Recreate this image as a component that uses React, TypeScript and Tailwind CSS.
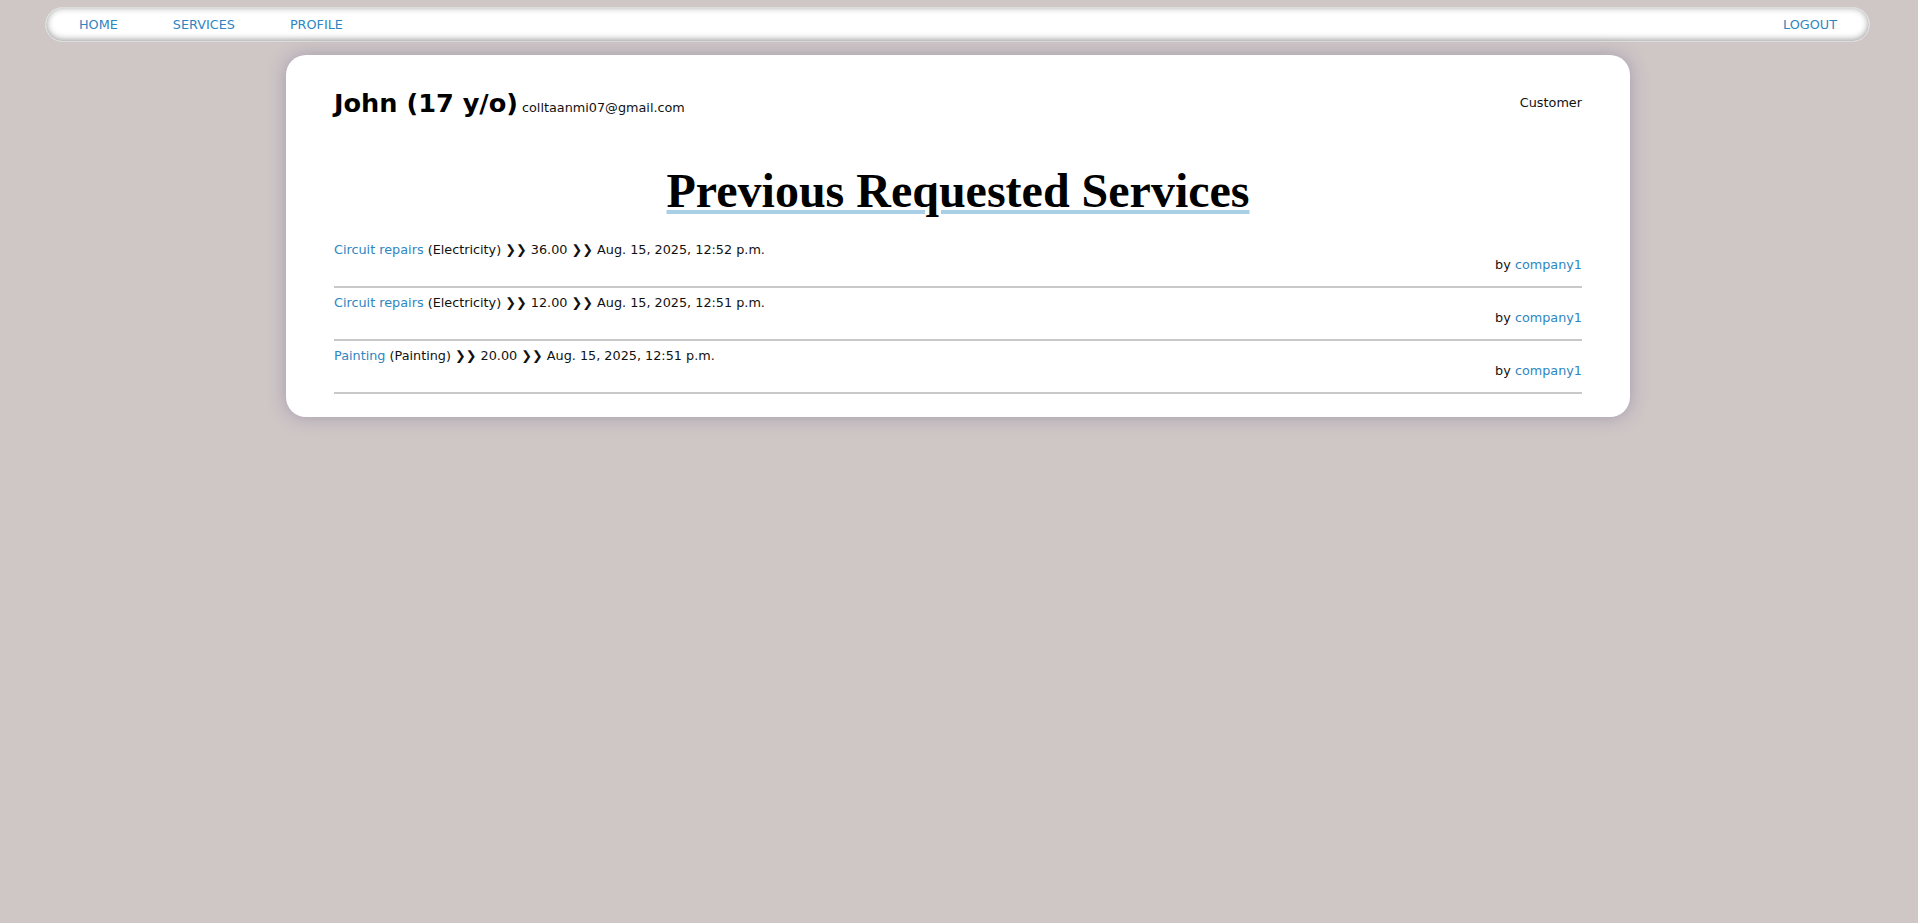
const navLinks = ["HOME", "SERVICES", "PROFILE"];

const requests = [
  { name: "Circuit repairs", category: "Electricity", price: "36.00", date: "Aug. 15, 2025, 12:52 p.m.", company: "company1" },
  { name: "Circuit repairs", category: "Electricity", price: "12.00", date: "Aug. 15, 2025, 12:51 p.m.", company: "company1" },
  { name: "Painting", category: "Painting", price: "20.00", date: "Aug. 15, 2025, 12:51 p.m.", company: "company1" },
];

const NavBar = () => (
  <nav className="ml-[45px] mr-[48px] h-[35px] flex items-center justify-between rounded-full border border-[#dcdcdc] bg-white pl-[33px] pr-[32px] shadow-[inset_0_-1px_7px_rgba(0,0,0,0.42)]">
    <div className="flex items-center gap-[55px]">
      {navLinks.map((label) => (
        <a key={label} href="#" className="text-[12.8px] leading-[15px] text-[#2e86c1]">
          {label}
        </a>
      ))}
    </div>
    <a href="#" className="text-[12.8px] leading-[15px] text-[#2e86c1]">
      LOGOUT
    </a>
  </nav>
);

const RequestRow = ({
  name,
  category,
  price,
  date,
  company,
}: {
  name: string;
  category: string;
  price: string;
  date: string;
  company: string;
}) => (
  <div className="pt-[7px] first:pt-0">
    <div className="text-[12.8px] leading-[15px] text-[#111]">
      <a href="#" className="text-[#2e86c1]">{name}</a> ({category}) ❯❯ {price} ❯❯ {date}
    </div>
    <div className="text-right text-[12.8px] leading-[15px] text-[#111] pb-[14px]">
      by <a href="#" className="text-[#2e86c1]">{company}</a>
    </div>
    <div className="h-[2px] bg-[#c8c8c8]" />
  </div>
);

export default function App() {
  return (
    <div className="min-h-screen bg-[#cfc6c6] pt-[7px] font-['DejaVu_Sans',sans-serif]">
      <NavBar />
      <main className="ml-[286px] mt-[13px] w-[1344px] rounded-[20px] bg-white px-[48px] pt-[33px] pb-[23px] shadow-[0_0_18px_rgba(80,80,130,0.35)]">
        <div className="flex items-start justify-between">
          <h2 className="text-[25.6px] leading-[30px] font-bold text-black">
            John (17 y/o)
            <span className="ml-[4px] text-[12.8px] font-normal text-[#111]">colltaanmi07@gmail.com</span>
          </h2>
          <div className="mt-[7px] text-[12.8px] leading-[15px] text-[#111]">Customer</div>
        </div>

        <h1 className="mt-[40px] text-center font-['Liberation_Serif',serif] text-[48px] leading-[55px] font-bold text-black">
          <span className="underline decoration-[#a8cfe6]">Previous Requested Services</span>
        </h1>

        <div className="mt-[24px] flex flex-col">
          {requests.map((r, i) => (
            <RequestRow key={i} {...r} />
          ))}
        </div>
      </main>
    </div>
  );
}
